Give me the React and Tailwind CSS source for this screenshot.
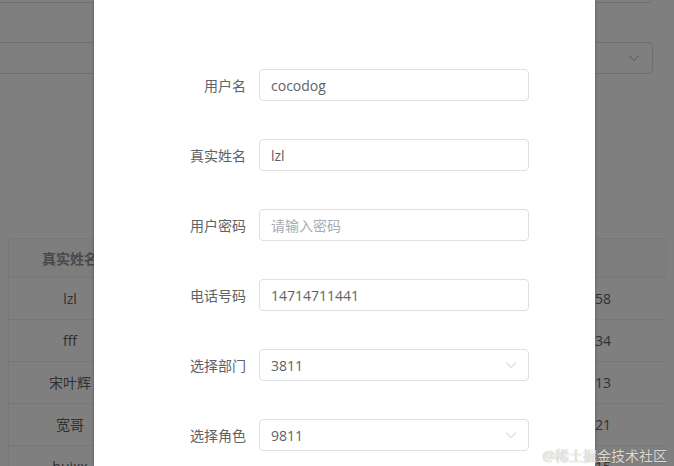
import React from "react";

const font = { fontFamily: '"Open Sans", "Noto Sans CJK SC", sans-serif' };

const rows = [
  { name: "lzl", phone: "13911223358" },
  { name: "fff", phone: "15800112234" },
  { name: "宋叶辉", phone: "18622334413" },
  { name: "宽哥", phone: "13755667721" },
  { name: "huixx", phone: "17788990015" },
];

const fields = [
  { label: "用户名", value: "cocodog" },
  { label: "真实姓名", value: "lzl" },
  { label: "用户密码", placeholder: "请输入密码" },
  { label: "电话号码", value: "14714711441" },
  { label: "选择部门", value: "3811", select: true },
  { label: "选择角色", value: "9811", select: true },
];

function Chevron({ color = "#c0c4cc" }) {
  return (
    <svg width="12" height="8" viewBox="0 0 12 8" fill="none">
      <polyline points="1,1.5 6,6.5 11,1.5" stroke={color} strokeWidth="1" />
    </svg>
  );
}

function Page() {
  return (
    <div className="flex flex-col">
      {/* search bar remains, mostly under the dialog */}
      <div className="pr-[21px]">
        <div className="-mt-[29px] -ml-[10px] h-8 rounded border border-[#dcdfe6]" />
        <div className="mt-[39px] -ml-[10px] h-8 rounded border border-[#dcdfe6] flex items-center justify-end pr-[12px]">
          <Chevron color="#a8abb2" />
        </div>
      </div>

      {/* user table, middle columns sit under the dialog */}
      <div className="mt-[164px] mx-[8px] border-l border-[#ebeef5] text-[14px]">
        <div className="flex h-[40px] items-center bg-[#fafafa] border-b border-t border-[#ebeef5] font-bold text-[#909399]">
          <div className="w-[122px] text-center">真实姓名</div>
          <div className="w-[366px]" />
          <div className="w-[140px]" />
          <div className="flex-1" />
        </div>
        {rows.map((r) => (
          <div
            key={r.name}
            className="flex h-[42px] items-center border-b border-[#ebeef5] text-[#606266]"
          >
            <div className="w-[122px] text-center">{r.name}</div>
            <div className="w-[366px]" />
            <div className="w-[140px] text-center">{r.phone}</div>
            <div className="flex-1" />
          </div>
        ))}
      </div>
    </div>
  );
}

function Dialog() {
  return (
    <div className="absolute top-0 bottom-0 left-[94px] w-[501px] bg-white shadow-[0_1px_3px_rgba(0,0,0,0.3)] pt-[69px]">
      {fields.map((f) => (
        <div key={f.label} className="flex items-center h-8 mb-[38px]">
          <div className="w-[152px] text-right text-[14px] text-[#606266]">
            {f.label}
          </div>
          <div className="ml-[13px] w-[270px] h-8 rounded border border-[#dcdfe6] flex items-center justify-between pl-[11px] pr-[11px] text-[14px]">
            {f.value ? (
              <span className="text-[#606266]">{f.value}</span>
            ) : (
              <span className="text-[#a8abb2]">{f.placeholder}</span>
            )}
            {f.select && <Chevron />}
          </div>
        </div>
      ))}
    </div>
  );
}

export default function App() {
  return (
    <div
      className="relative w-[674px] h-[466px] overflow-hidden bg-white"
      style={font}
    >
      <Page />
      {/* modal mask */}
      <div className="absolute inset-0 bg-black/50" />
      <Dialog />
      <div className="absolute right-[7px] bottom-[0px] text-[14px] text-white/80 [text-shadow:0_0_1px_rgba(0,0,0,0.45)] leading-5">
        @稀土掘金技术社区
      </div>
    </div>
  );
}
